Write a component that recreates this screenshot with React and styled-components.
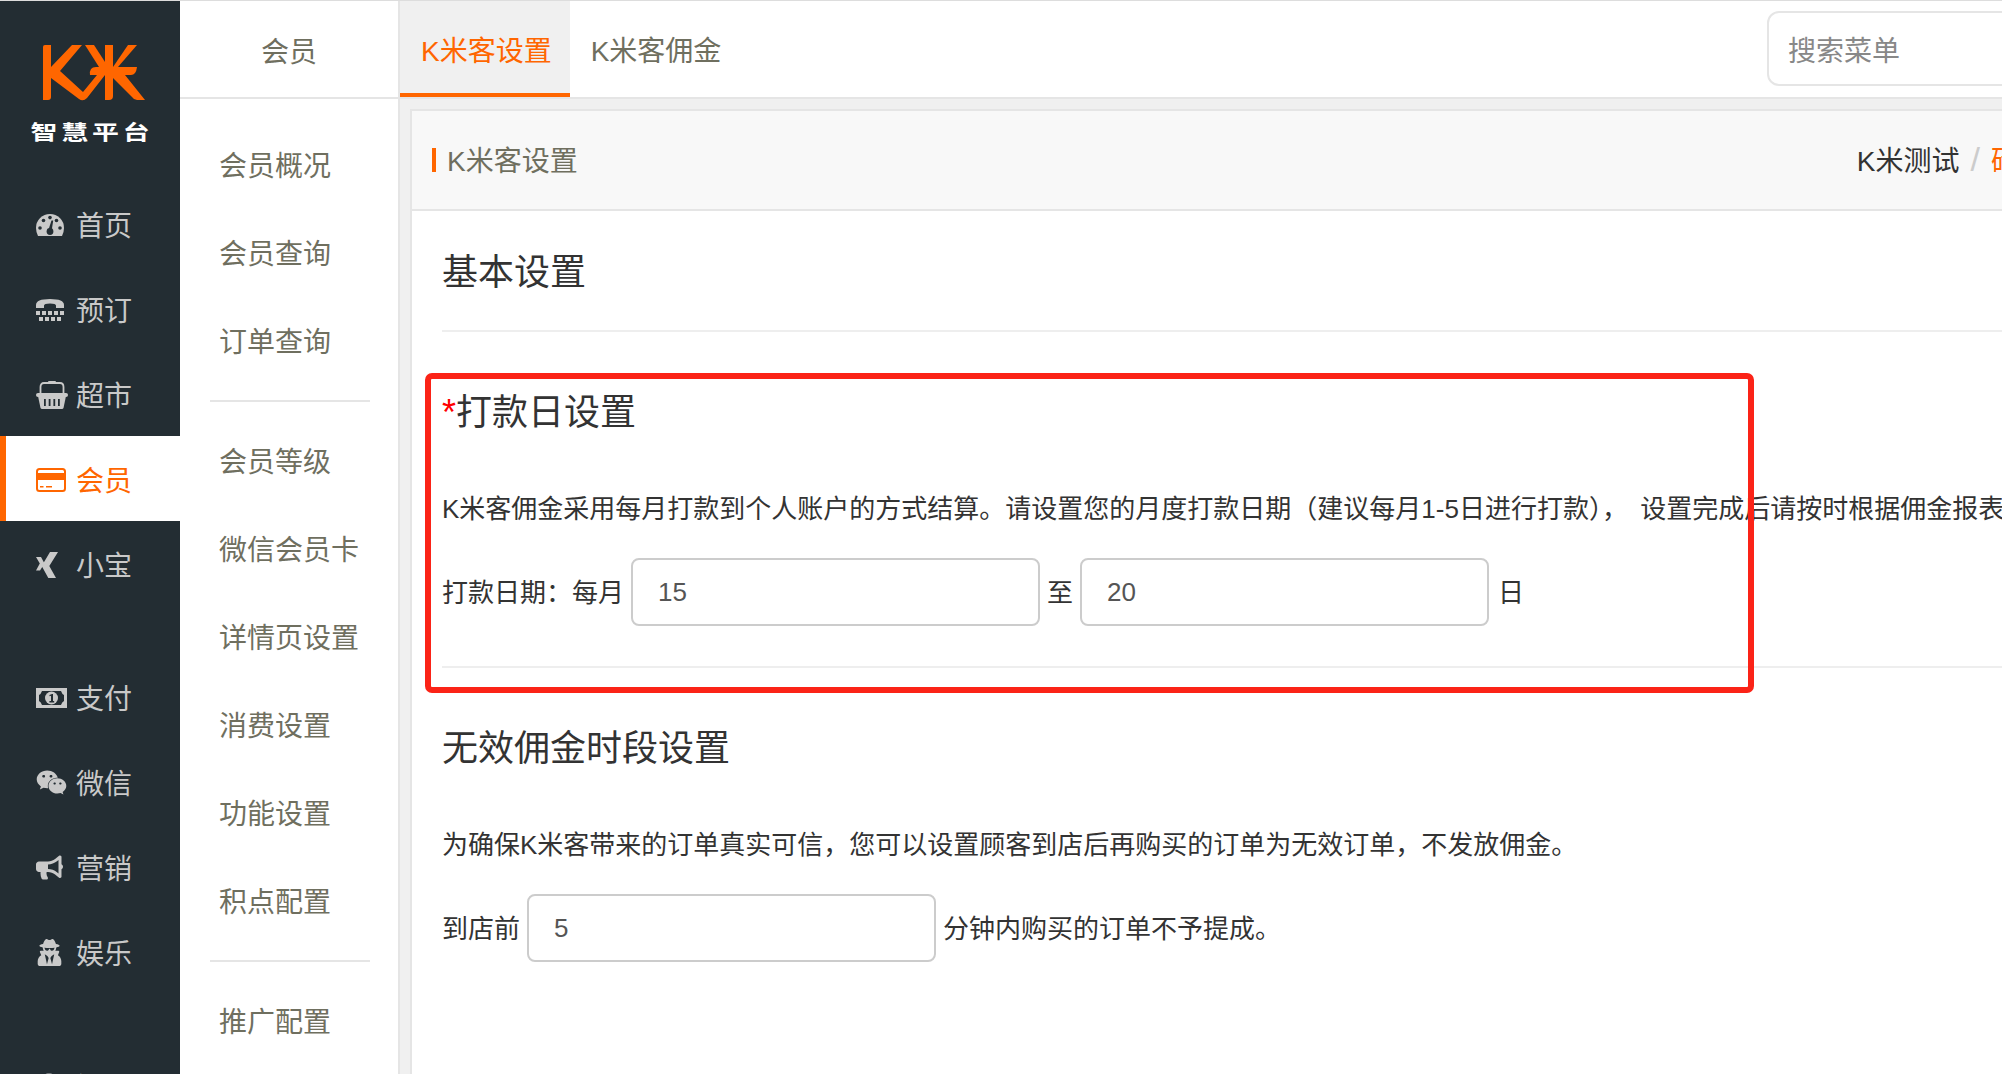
import React from 'react';
import styled, { createGlobalStyle } from 'styled-components';
import { FaWeixin, FaBullhorn, FaUserSecret, FaCog } from 'react-icons/fa';

const orange = '#ff6600';
const line = '#e5e5e5';
const navBg = '#232d33';

const GlobalStyle = createGlobalStyle`
  html, body {
    margin: 0;
    padding: 0;
    height: 100%;
    overflow: hidden;
    background: #f0f0f0;
  }
  * {
    box-sizing: border-box;
  }
`;

const Frame = styled.div`
  position: relative;
  width: 2002px;
  height: 1074px;
  overflow: hidden;
  border-top: 1px solid #ddd;
  font-family: "Liberation Sans", "Noto Sans CJK SC", sans-serif;
`;

const Page = styled.div`
  display: flex;
  width: 2400px;
  height: 1073px;
`;

const Sidebar = styled.aside`
  flex: none;
  width: 180px;
  background: ${navBg};
  overflow: hidden;
`;

const Brand = styled.div`
  height: 180px;
  padding-top: 44px;
  display: flex;
  flex-direction: column;
  align-items: center;
`;

const BrandMark = styled.svg`
  display: block;
  width: 102px;
  height: 56px;
  margin-left: 8px;
`;

const BrandName = styled.div`
  margin-top: 19px;
  margin-left: 4px;
  font-size: 24px;
  line-height: 26px;
  font-weight: 700;
  letter-spacing: 3.5px;
  color: #fff;
  white-space: nowrap;
  transform: scale(1.12, 0.85);
`;

const NavGroup = styled.div`
  margin-bottom: 48px;
`;

const NavItem = styled.div`
  display: flex;
  align-items: center;
  height: 85px;
  padding-left: ${(p) => (p.$active ? '30px' : '36px')};
  border-left: ${(p) => (p.$active ? `6px solid ${orange}` : 'none')};
  background: ${(p) => (p.$active ? '#fff' : 'transparent')};
  color: ${(p) => (p.$active ? orange : '#c9c9c9')};
  font-size: 28px;
`;

const NavIcon = styled.span`
  flex: none;
  width: 40px;
  padding-top: 2px;
  display: flex;
  align-items: center;

  svg {
    width: auto;
    height: ${(p) => p.$h}px;
    display: block;
  }
`;

const SubNav = styled.nav`
  flex: none;
  width: 220px;
  background: #fff;
  border-right: 2px solid ${line};
  color: #6f6f5f;
  font-size: 28px;
`;

const SubHead = styled.div`
  height: 98px;
  padding-top: 2px;
  border-bottom: 2px solid ${line};
  display: flex;
  align-items: center;
  justify-content: center;
`;

const SubList = styled.div`
  padding-top: 22px;
`;

const SubItem = styled.div`
  height: 88px;
  line-height: 92px;
  padding-left: 39px;
`;

const SubRule = styled.div`
  height: 2px;
  margin: 15px 28px 15px 30px;
  background: ${line};
`;

const Main = styled.main`
  flex: 1;
  min-width: 0;
  background: #f0f0f0;
`;

const TabBar = styled.div`
  display: flex;
  align-items: stretch;
  height: 98px;
  background: #fff;
  border-bottom: 2px solid ${line};
`;

const Tab = styled.div`
  padding: 3px 18px 0 21px;
  display: flex;
  align-items: center;
  font-size: 28px;
  color: ${(p) => (p.$active ? orange : '#6f6f5f')};
  background: ${(p) => (p.$active ? '#f0f0f0' : 'transparent')};
  border-bottom: 4px solid ${(p) => (p.$active ? orange : 'transparent')};
`;

const Search = styled.input`
  align-self: flex-start;
  width: 400px;
  height: 75px;
  margin: 10px 233px 0 auto;
  padding: 7px 19px 0;
  border: 2px solid ${line};
  border-radius: 12px;
  background: #fff;
  font: inherit;
  font-size: 28px;
  outline: none;

  &::placeholder {
    color: #888;
    opacity: 1;
  }
`;

const Panel = styled.section`
  margin: 10px 10px 0;
  border: 2px solid ${line};
  border-bottom: none;
  background: #fff;
  height: 1000px;
`;

const PanelHead = styled.header`
  display: flex;
  align-items: center;
  justify-content: space-between;
  height: 100px;
  padding: 0 369px 0 20px;
  background: #f8f8f8;
  border-bottom: 2px solid ${line};
  font-size: 28px;
`;

const PanelTitle = styled.h2`
  margin: 0;
  height: 24px;
  padding-left: 11px;
  border-left: 4px solid ${orange};
  font-size: 28px;
  line-height: 28px;
  font-weight: 400;
  color: #6f6f5f;
`;

const Crumbs = styled.div`
  display: flex;
  align-items: center;
  padding-bottom: 2px;
  color: #333;
`;

const CrumbSep = styled.span`
  margin: 0 11px;
  font-size: 34px;
  color: #ccc;
`;

const CrumbNow = styled.span`
  color: ${orange};
`;

const PanelBody = styled.div`
  padding: 35px 0 0 30px;
  color: #333;
`;

const Heading = styled.h3`
  margin: 0;
  height: 50px;
  font-size: 36px;
  line-height: 54px;
  font-weight: 400;
  color: #333;
`;

const Star = styled.span`
  color: #f00;
`;

const Rule = styled.hr`
  margin: ${(p) => p.$top}px 0 54px;
  border: none;
  height: 2px;
  background: #eee;
`;

const Para = styled.p`
  margin: 52px 0 30px;
  height: 40px;
  font-size: 26px;
  line-height: 43px;
  white-space: nowrap;
`;

const Pause = styled.span`
  margin-right: 5px;
`;

const FieldRow = styled.div`
  display: flex;
  align-items: center;
  gap: 7px;
  font-size: 26px;
  height: 68px;
  white-space: nowrap;
`;

const FieldText = styled.span`
  line-height: 30px;
  padding-top: 1px;
  margin-left: ${(p) => p.$gap || 0}px;
`;

const NumberInput = styled.input`
  flex: none;
  width: 409px;
  height: 68px;
  padding: 0 25px;
  border: 2px solid #ccc;
  border-radius: 8px;
  background: #fff;
  color: #555;
  font: inherit;
  font-size: 26px;
  outline: none;
`;

// annotation drawn over the screenshot, not part of the page layout
const Highlight = styled.div`
  position: absolute;
  left: 425px;
  top: 372px;
  width: 1329px;
  height: 320px;
  border: 6px solid #fb2317;
  border-radius: 7px;
  pointer-events: none;
`;

function GaugeIcon() {
  return (
    <svg viewBox="0 0 28 22" fill="currentColor">
      <path d="M2 22Q0 18 0 14A14 14 0 0 1 28 14Q28 18 26 22Z" />
      <g fill={navBg}>
        <circle cx="4" cy="14" r="1.8" />
        <circle cx="7.5" cy="6.5" r="1.8" />
        <circle cx="14" cy="3.6" r="1.8" />
        <circle cx="20.5" cy="6.5" r="1.8" />
        <circle cx="24" cy="14" r="1.8" />
        <circle cx="14" cy="17.5" r="3.4" />
        <path d="M12.4 16L15.5 6.5H17.2L15.6 17Z" />
      </g>
    </svg>
  );
}

function PhoneIcon() {
  return (
    <svg viewBox="0 0 28 22" fill="currentColor">
      <path d="M0 9V6Q0 0 14 0Q28 0 28 6V9H20V6.5Q20 4.5 14 4.5Q8 4.5 8 6.5V9Z" />
      <path d="M0 12h4v4H0zM6 12h4v4H6zM12 12h4v4h-4zM18 12h4v4h-4zM24 12h4v4h-4z" />
      <path d="M3 18h4v4H3zM9 18h4v4H9zM15 18h4v4h-4zM21 18h4v4h-4z" />
    </svg>
  );
}

function BasketIcon() {
  return (
    <svg viewBox="0 0 32 28" fill="currentColor">
      <path d="M4.5 12V6Q4.5 2 8 2H24Q27.5 2 27.5 6V12" fill="none" stroke="currentColor" strokeWidth="1.8" />
      <rect x="12" y="0" width="8" height="3" rx="1" />
      <rect x="0" y="12" width="32" height="4" rx="2" />
      <path d="M2 15H30L27.5 27Q27 28 26 28H6Q5 28 4.5 27Z" />
      <path fill={navBg} d="M8 18h1.8v7H8zM12.7 18h1.8v7h-1.8zM17.4 18h1.8v7h-1.8zM22 18h1.8v7H22z" />
    </svg>
  );
}

function CardIcon() {
  return (
    <svg viewBox="0 0 30 24" fill="currentColor">
      <rect x="1" y="1" width="28" height="22" rx="2.5" fill="none" stroke="currentColor" strokeWidth="2" />
      <rect x="1" y="5" width="28" height="7" />
      <path d="M4 18h3.5v1.6H4zM10 18h6v1.6h-6z" />
    </svg>
  );
}

function XingIcon() {
  return (
    <svg viewBox="0 0 22 26" fill="currentColor">
      <path d="M14 0H22L13.3 14L20 26H12.3L5.7 14Z" />
      <path d="M0 5H5L8.5 11.5L4 18.5H0L3.8 11.5Z" />
    </svg>
  );
}

function MoneyIcon() {
  return (
    <svg viewBox="0 0 31 20" fill="currentColor">
      <rect width="31" height="20" />
      <path fill={navBg} d="M6 3H25Q26 6 28 7V13Q26 14 25 17H6Q5 14 3 13V7Q5 6 6 3Z" />
      <circle cx="15.5" cy="10" r="6.5" />
      <path fill={navBg} d="M13.5 7L16 6H17V13H18.2V14.4H13.4V13H15V7.8L13.5 8.3Z" />
    </svg>
  );
}

const navGroups = [
  [
    { label: '首页', Icon: GaugeIcon, h: 22 },
    { label: '预订', Icon: PhoneIcon, h: 22 },
    { label: '超市', Icon: BasketIcon, h: 28 },
    { label: '会员', Icon: CardIcon, h: 24, active: true },
    { label: '小宝', Icon: XingIcon, h: 26 },
  ],
  [
    { label: '支付', Icon: MoneyIcon, h: 20 },
    { label: '微信', Icon: FaWeixin, h: 31 },
    { label: '营销', Icon: FaBullhorn, h: 27 },
    { label: '娱乐', Icon: FaUserSecret, h: 27 },
  ],
  [{ label: '设置', Icon: FaCog, h: 26 }],
];

const subGroups = [
  ['会员概况', '会员查询', '订单查询'],
  ['会员等级', '微信会员卡', '详情页设置', '消费设置', '功能设置', '积点配置'],
  ['推广配置'],
];

function BrandLogo() {
  return (
    <BrandMark viewBox="43 45 102 56" fill={orange}>
      <path d="M43 47q0-2 2-2h6v52q0 3-3 3h-5z" />
      <path d="M51 67L72 45H82L60 71L83 92L97 75H105L87 98q-4 4-8 1L51 78z" />
      <path d="M96 67H137Q136 75 131 75H90Q89 67 96 67z" />
      <path d="M105 45H113V96q0 4-4 4H105z" />
      <path d="M85 45H94L105 62V67H99z" />
      <path d="M128 45H137L118 67H113z" />
      <path d="M113 75H125L145 100H137q-3 0-5-3L113 78z" />
    </BrandMark>
  );
}

export default function App() {
  return (
    <Frame>
      <GlobalStyle />
      <Page>
        <Sidebar>
          <Brand>
            <BrandLogo />
            <BrandName>智慧平台</BrandName>
          </Brand>
          {navGroups.map((group, i) => (
            <NavGroup key={i}>
              {group.map(({ label, Icon, h, active }) => (
                <NavItem key={label} $active={active}>
                  <NavIcon $h={h}>
                    <Icon />
                  </NavIcon>
                  {label}
                </NavItem>
              ))}
            </NavGroup>
          ))}
        </Sidebar>

        <SubNav>
          <SubHead>会员</SubHead>
          <SubList>
            {subGroups.map((group, i) => (
              <React.Fragment key={i}>
                {i > 0 && <SubRule />}
                {group.map((label) => (
                  <SubItem key={label}>{label}</SubItem>
                ))}
              </React.Fragment>
            ))}
          </SubList>
        </SubNav>

        <Main>
          <TabBar>
            <Tab $active>K米客设置</Tab>
            <Tab>K米客佣金</Tab>
            <Search placeholder="搜索菜单" />
          </TabBar>
          <Panel>
            <PanelHead>
              <PanelTitle>K米客设置</PanelTitle>
              <Crumbs>
                K米测试
                <CrumbSep>/</CrumbSep>
                <CrumbNow>砖</CrumbNow>
              </Crumbs>
            </PanelHead>
            <PanelBody>
              <Heading>基本设置</Heading>
              <Rule $top={34} />

              <Heading>
                <Star>*</Star>打款日设置
              </Heading>
              <Para>
                K米客佣金采用每月打款到个人账户的方式结算。请设置您的月度打款日期（建议每月1-5日进行打款）<Pause>， </Pause>设置完成后请按时根据佣金报表打款。
              </Para>
              <FieldRow>
                <FieldText>打款日期：每月</FieldText>
                <NumberInput defaultValue="15" />
                <FieldText>至</FieldText>
                <NumberInput defaultValue="20" />
                <FieldText $gap={2}>日</FieldText>
              </FieldRow>
              <Rule $top={40} />

              <Heading>无效佣金时段设置</Heading>
              <Para>
                为确保K米客带来的订单真实可信，您可以设置顾客到店后再购买的订单为无效订单，不发放佣金。
              </Para>
              <FieldRow>
                <FieldText>到店前</FieldText>
                <NumberInput defaultValue="5" />
                <FieldText>分钟内购买的订单不予提成。</FieldText>
              </FieldRow>
            </PanelBody>
          </Panel>
        </Main>
      </Page>
      <Highlight />
    </Frame>
  );
}
